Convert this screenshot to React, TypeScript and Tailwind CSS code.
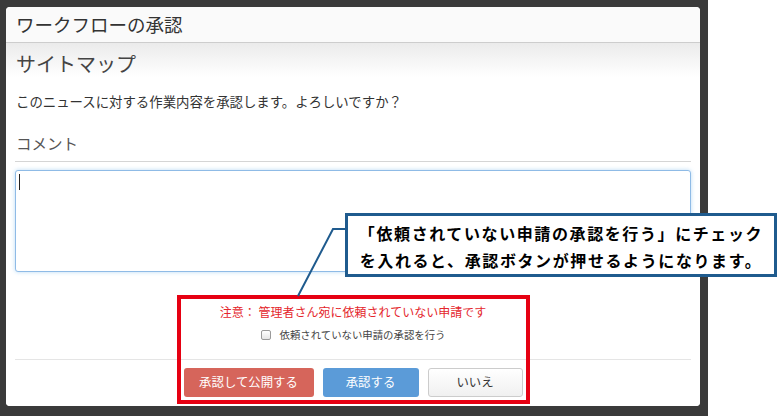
import React from "react";

const jp = { fontFamily: '"Noto Sans CJK JP", "Noto Sans", sans-serif' };

export default function App() {
  return (
    <div className="relative w-[782px] h-[416px] bg-white overflow-hidden" style={jp}>
      <div className="w-[708px] h-[416px] bg-[#3a3a3a] pt-[7px] pl-[6px] pr-[8px] pb-[10px]">
        <div className="h-full bg-white rounded-[4px] flex flex-col overflow-hidden">
          <div className="h-[36px] shrink-0 px-[9px] flex items-center border-b border-[#cdcdcd] bg-[#fafafa]">
            <span className="text-[18.5px] leading-none text-[#333] pl-[1px]">ワークフローの承認</span>
          </div>
          <div className="flex-1 flex flex-col px-[9px] bg-[linear-gradient(to_bottom,#ebebeb_0px,#ffffff_34px)]">
            <div className="mt-[7px] pl-[1px] text-[20px] leading-[28px] text-[#444]">サイトマップ</div>
            <div className="mt-[13px] pl-[1px] text-[13.4px] leading-[20px] text-[#333]">
              このニュースに対する作業内容を承認します。よろしいですか？
            </div>
            <div className="mt-[22px] pb-[8px] pl-[1px] border-b border-[#d5d5d5] text-[15.5px] leading-[20px] text-[#555]">
              コメント
            </div>
            <div className="mt-[8px] h-[102px] rounded-[3px] border border-[#8fbbe6] shadow-[0_0_4px_rgba(102,175,233,0.45)] bg-white">
              <div className="ml-[3px] mt-[3px] w-px h-[16px] bg-[#222]" />
            </div>
            <div className="mt-[32px] text-center text-[12px] leading-[16px] text-[#e4262c]">
              注意： 管理者さん宛に依頼されていない申請です
            </div>
            <div className="mt-[7px] flex items-center justify-center gap-[9px] text-[10.4px] leading-[16px] text-[#444]">
              <span className="w-[10px] h-[10px] rounded-[2px] border border-[#9a9a9a] bg-[linear-gradient(to_bottom,#ffffff,#e6e6e6)]" />
              <span>依頼されていない申請の承認を行う</span>
            </div>
            <div className="mt-[16px] border-t border-[#e5e5e5]" />
            <div className="mt-[8px] flex justify-center gap-[9px] text-[12.4px]">
              <div className="w-[130px] h-[29px] rounded-[3px] bg-[#d6655b] text-white flex items-center justify-center">承認して公開する</div>
              <div className="w-[96px] h-[29px] rounded-[3px] bg-[#5b9bd8] text-white flex items-center justify-center">承認する</div>
              <div className="w-[95px] h-[29px] rounded-[3px] border border-[#cccccc] bg-[linear-gradient(to_bottom,#ffffff,#f0f0f0)] text-[#333] flex items-center justify-center">いいえ</div>
            </div>
          </div>
        </div>
      </div>

      {/* annotation: red highlight box */}
      <div className="absolute left-[177px] top-[295px] w-[353px] h-[109px] border-[4px] border-[#e60012]" />

      {/* annotation: leader line */}
      <svg className="absolute left-0 top-0" width="782" height="416">
        <polyline points="298,296 333,229 346,229" fill="none" stroke="#1f5b8e" strokeWidth="2" />
      </svg>

      {/* annotation: callout */}
      <div className="absolute left-[345px] top-[213px] w-[432px] h-[64px] border-[3px] border-[#1f5b8e] bg-white pt-[4px] text-center text-[16px] leading-[27px] font-bold tracking-[1.6px] text-black">
        <div>「依頼されていない申請の承認を行う」にチェック</div>
        <div>を入れると、承認ボタンが押せるようになります。</div>
      </div>
    </div>
  );
}
